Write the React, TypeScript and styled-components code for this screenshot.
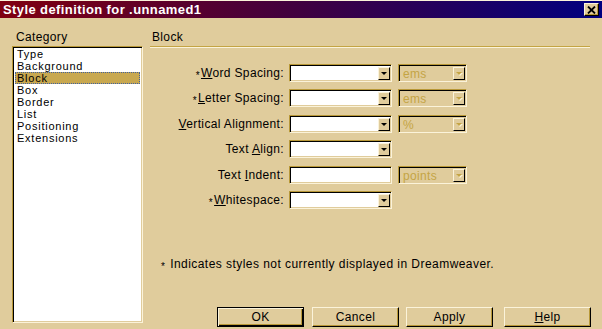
import React from 'react';
import styled, { createGlobalStyle } from 'styled-components';

const face = '#e0cc9c';
const light = '#fbf3da';
const shadow = '#b89838';
const gold = '#c4a444';

const GlobalStyle = createGlobalStyle`
    html, body {
        margin: 0;
        padding: 0;
        background: ${face};
    }
    body {
        font-family: "Liberation Sans", Arial, sans-serif;
        font-size: 12px;
        letter-spacing: 0.35px;
        color: #000;
    }
`;

const Window = styled.div`
    width: 602px;
    height: 329px;
    box-sizing: border-box;
    background: ${face};
    border-top: 1px solid ${light};
    overflow: hidden;
`;

const TitleBar = styled.div`
    height: 17px;
    display: flex;
    align-items: center;
    justify-content: space-between;
    padding: 0 3px 0 3px;
    background: linear-gradient(to right, #800010, #400040 50%, #000080);
`;

const TitleText = styled.span`
    color: #fff;
    font-weight: bold;
    font-size: 13px;
    letter-spacing: 0.4px;
    line-height: 17px;
`;

const CloseButton = styled.div`
    width: 15px;
    height: 13px;
    box-sizing: border-box;
    background: ${face};
    border: 1px solid;
    border-color: ${light} #000 #000 ${light};
    box-shadow: inset -1px -1px 0 ${shadow};
    display: flex;
    align-items: center;
    justify-content: center;
`;

const Body = styled.div`
    display: flex;
    padding: 12px 0 0 12px;
    gap: 7px;
`;

const Sidebar = styled.div`
    width: 131px;
    display: flex;
    flex-direction: column;
`;

const GroupLabel = styled.div`
    height: 14px;
    line-height: 14px;
    padding-left: 4px;
    margin-bottom: 2px;
`;

const ListBox = styled.div`
    height: 277px;
    box-sizing: border-box;
    background: #fff;
    border: 1px solid;
    border-color: ${shadow} ${light} ${light} ${shadow};
    box-shadow: inset 1px 1px 0 #000, inset -1px -1px 0 ${face};
    padding: 1px 2px 0 2px;
`;

const ListItem = styled.div<{ $selected?: boolean }>`
    height: 12px;
    line-height: 12px;
    font-size: 11px;
    letter-spacing: 0.75px;
    padding-left: 2px;
    box-sizing: border-box;
    background: ${(p) => (p.$selected ? '#c8a850' : 'transparent')};
    outline: ${(p) => (p.$selected ? '1px dotted #4060a0' : 'none')};
    outline-offset: -1px;
    white-space: nowrap;
`;

const Panel = styled.div`
    width: 441px;
    display: flex;
    flex-direction: column;
`;

const PanelHeading = styled.div`
    height: 14px;
    line-height: 14px;
    padding-left: 2px;
    margin-bottom: 2px;
`;

const Groove = styled.div`
    height: 1px;
    width: 440px;
    background: ${gold};
    border-bottom: 1px solid ${light};
`;

const Form = styled.div`
    display: grid;
    grid-template-columns: 139px 109px 69px;
    grid-auto-rows: 18px;
    row-gap: 7.4px;
    margin-top: 16px;
`;

const FieldLabel = styled.label`
    grid-column: 1;
    text-align: right;
    padding-right: 5px;
    line-height: 18px;
    white-space: nowrap;
`;

const Sunken = styled.div<{ $disabled?: boolean }>`
    height: 18px;
    box-sizing: border-box;
    border: 1px solid;
    border-color: ${shadow} ${light} ${light} ${shadow};
    box-shadow: inset 1px 1px 0 #000, inset -1px -1px 0 ${face};
    background: ${(p) => (p.$disabled ? face : '#fff')};
    color: ${(p) => (p.$disabled ? gold : '#000')};
    display: flex;
    align-items: stretch;
    padding: 2px 1px 1px 2px;
`;

const Combo = styled(Sunken)<{ $width: number }>`
    width: ${(p) => p.$width}px;
`;

const ComboValue = styled.span`
    flex: 1;
    line-height: 14px;
    padding-left: 2px;
`;

const DropButton = styled.div`
    width: 12px;
    box-sizing: border-box;
    background: ${face};
    border: 1px solid;
    border-color: ${light} #000 #000 ${light};
    display: flex;
    align-items: center;
    justify-content: center;
`;

const Arrow = styled.div<{ $disabled?: boolean }>`
    width: 0;
    height: 0;
    border-left: 3px solid transparent;
    border-right: 3px solid transparent;
    border-top: 3px solid ${(p) => (p.$disabled ? gold : '#000')};
    filter: ${(p) => (p.$disabled ? `drop-shadow(1px 1px 0 ${light})` : 'none')};
`;

const Note = styled.div`
    margin-top: 48px;
    padding-left: 11px;
    line-height: 14px;
    letter-spacing: 0.45px;
`;

const ButtonRow = styled.div`
    display: flex;
    justify-content: flex-end;
    margin-top: 33px;
`;

const PushButton = styled.div<{ $isDefault?: boolean; $gap: number }>`
    width: 87px;
    height: 20px;
    margin-left: ${(p) => p.$gap}px;
    box-sizing: border-box;
    background: ${face};
    border: 1px solid;
    border-color: ${(p) => (p.$isDefault ? '#000' : `${light} #000 #000 ${light}`)};
    box-shadow: ${(p) =>
        p.$isDefault
            ? `inset 1px 1px 0 ${light}, inset -1px -1px 0 #000, inset -2px -2px 0 ${shadow}`
            : `inset -1px -1px 0 ${shadow}`};
    display: flex;
    align-items: center;
    justify-content: center;
    line-height: 14px;
`;

const Mnemonic = styled.span`
    text-decoration: underline;
    text-underline-offset: 1px;
`;

const Star = styled.span`
    font-size: 10px;
    vertical-align: -2px;
    margin-right: 1px;
`;

type Row = {
    label: React.ReactNode;
    unit?: string;
    plain?: boolean;
};

const rows: Row[] = [
    { label: <><Star>*</Star><Mnemonic>W</Mnemonic>ord Spacing:</>, unit: 'ems' },
    { label: <><Star>*</Star><Mnemonic>L</Mnemonic>etter Spacing:</>, unit: 'ems' },
    { label: <><Mnemonic>V</Mnemonic>ertical Alignment:</>, unit: '%' },
    { label: <>Text <Mnemonic>A</Mnemonic>lign:</> },
    { label: <>Text <Mnemonic>I</Mnemonic>ndent:</>, unit: 'points', plain: true },
    { label: <><Star>*</Star><Mnemonic>W</Mnemonic>hitespace:</> }
];

const categories = ['Type', 'Background', 'Block', 'Box', 'Border', 'List', 'Positioning', 'Extensions'];

export default function App() {
    return (
        <>
            <GlobalStyle />
            <Window>
                <TitleBar>
                    <TitleText>Style definition for .unnamed1</TitleText>
                    <CloseButton>
                        <svg width="9" height="8" viewBox="0 0 9 8">
                            <path d="M1 0.5 L8 7.5 M8 0.5 L1 7.5" stroke="#000" strokeWidth="1.8" />
                        </svg>
                    </CloseButton>
                </TitleBar>
                <Body>
                    <Sidebar>
                        <GroupLabel>Category</GroupLabel>
                        <ListBox>
                            {categories.map((c) => (
                                <ListItem key={c} $selected={c === 'Block'}>
                                    {c}
                                </ListItem>
                            ))}
                        </ListBox>
                    </Sidebar>
                    <Panel>
                        <PanelHeading>Block</PanelHeading>
                        <Groove />
                        <Form>
                            {rows.map((r, i) => (
                                <React.Fragment key={i}>
                                    <FieldLabel>{r.label}</FieldLabel>
                                    <div>
                                        <Combo $width={103}>
                                            <ComboValue />
                                            {!r.plain && (
                                                <DropButton>
                                                    <Arrow />
                                                </DropButton>
                                            )}
                                        </Combo>
                                    </div>
                                    <div>
                                        {r.unit && (
                                            <Combo $width={69} $disabled>
                                                <ComboValue>{r.unit}</ComboValue>
                                                <DropButton>
                                                    <Arrow $disabled />
                                                </DropButton>
                                            </Combo>
                                        )}
                                    </div>
                                </React.Fragment>
                            ))}
                        </Form>
                        <Note>
                            <Star>*</Star> Indicates styles not currently displayed in Dreamweaver.
                        </Note>
                        <ButtonRow>
                            <PushButton $isDefault $gap={0}>OK</PushButton>
                            <PushButton $gap={8}>Cancel</PushButton>
                            <PushButton $gap={7}>Apply</PushButton>
                            <PushButton $gap={11}>
                                <Mnemonic>H</Mnemonic>elp
                            </PushButton>
                        </ButtonRow>
                    </Panel>
                </Body>
            </Window>
        </>
    );
}
